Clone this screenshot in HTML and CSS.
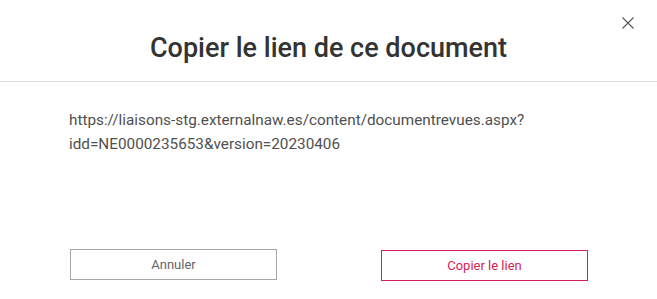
FILE: index.html
```html
<!DOCTYPE html>
<html lang="fr">
<head>
<meta charset="utf-8">
<link rel="stylesheet" href="styles.css">
</head>
<body>
<div class="modal">
  <header class="modal-header">
    <h1 class="modal-title">Copier le lien de ce document</h1>
    <button class="close-btn" aria-label="Fermer">
      <svg width="12" height="12" viewBox="0 0 12 12"><path d="M0.5 0.5 L11.5 11.5 M11.5 0.5 L0.5 11.5" stroke="#555" stroke-width="1.1" fill="none"/></svg>
    </button>
  </header>
  <div class="modal-body">
    <p class="link-text">https://liaisons-stg.externalnaw.es/content/documentrevues.aspx?<wbr>idd=NE0000235653&amp;version=20230406</p>
  </div>
  <footer class="modal-footer">
    <button class="btn btn-cancel">Annuler</button>
    <button class="btn btn-copy">Copier le lien</button>
  </footer>
</div>
</body>
</html>
```
FILE: styles.css
```css
* { box-sizing: border-box; }
html, body { margin: 0; padding: 0; background: #fff; }
body { font-family: Roboto, "Liberation Sans", sans-serif; width: 657px; height: 299px; overflow: hidden; }
.modal { display: flex; flex-direction: column; height: 299px; }
.modal-header {
  position: relative;
  height: 82px;
  border-bottom: 1px solid #dcdcdc;
  display: flex;
  align-items: center;
  justify-content: center;
  padding-top: 15px;
}
.modal-title {
  margin: 0;
  font-size: 27px;
  font-weight: 500;
  color: #333;
  letter-spacing: 0;
}
.close-btn {
  position: absolute;
  top: 17px;
  right: 23px;
  border: 0;
  background: none;
  padding: 0;
  width: 12px;
  height: 12px;
  display: flex;
}
.modal-body { padding: 26px 69px 0; flex: 1; }
.link-text {
  margin: 0;
  font-size: 15.3px;
  line-height: 24px;
  color: #505050;
}
.modal-footer {
  display: flex;
  justify-content: space-between;
  padding: 0 69px 18px 70px;
  align-items: flex-start;
}
.btn {
  width: 207px;
  height: 31px;
  background: #fff;
  font-family: Roboto, "Liberation Sans", sans-serif;
  font-size: 13px;
  cursor: pointer;
}
.btn-cancel { border: 1px solid #a6a6a6; color: #666; }
.btn-copy { border: 1px solid #d21f55; color: #d21f55; margin-top: 1px; }
```
